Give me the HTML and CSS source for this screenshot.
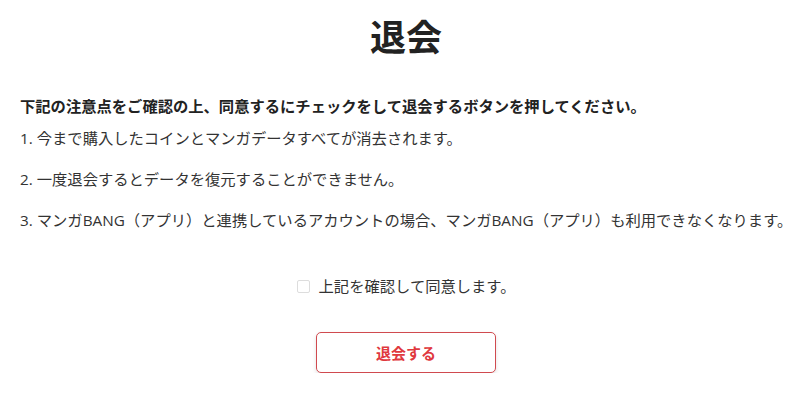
FILE: index.html
```html
<!doctype html>
<html lang="ja">
<head>
<meta charset="UTF-8">
<title>退会</title>
<link rel="stylesheet" href="styles.css">
</head>
<body>
	<main class="withdraw">
		<h1 class="withdraw-title">退会</h1>

		<p class="withdraw-lead">下記の注意点をご確認の上、同意するにチェックをして退会するボタンを押してください。</p>
		<p class="withdraw-note">1. 今まで購入したコインとマンガデータすべてが消去されます。</p>
		<p class="withdraw-note">2. 一度退会するとデータを復元することができません。</p>
		<p class="withdraw-note">3. マンガBANG（アプリ）と連携しているアカウントの場合、マンガBANG（アプリ）も利用できなくなります。</p>

		<label class="agree">
			<input type="checkbox" class="agree-box">
			<span>上記を確認して同意します。</span>
		</label>

		<div class="actions">
			<button type="button" class="btn-withdraw">退会する</button>
		</div>
	</main>
</body>
</html>
```

FILE: styles.css
```css
body {
	margin: 0;
	background: #fff;
	color: #333;
	font-family: "Open Sans", "Noto Sans CJK JP", sans-serif;
}

.withdraw { padding: 16px 8px 0 20px; }

.withdraw-title {
	margin: 0;
	font-size: 36px;
	line-height: 44px;
	font-weight: 700;
	text-align: center;
	color: #222;
}

.withdraw-lead {
	margin: 34px 0 8px;
	font-size: 15.3px;
	line-height: 24px;
	font-weight: 700;
	color: #222;
}

.withdraw-note {
	margin: 0 0 17px;
	font-size: 15.3px;
	line-height: 24px;
	white-space: nowrap;
}

.agree {
	display: flex;
	justify-content: center;
	align-items: center;
	gap: 9px;
	margin-top: 42px;
	font-size: 15.3px;
	line-height: 24px;
}

.agree-box {
	appearance: none;
	margin: 0;
	width: 13px;
	height: 13px;
	border: 1px solid #ddd;
	border-radius: 2px;
	background: #fff;
}

.actions {
	display: flex;
	justify-content: center;
	margin-top: 34px;
}

.btn-withdraw {
	width: 180px;
	height: 41px;
	border: 1px solid #d04a4f;
	border-radius: 5px;
	background: #fff;
	box-shadow: 0 2px 4px rgba(0, 0, 0, 0.12);
	color: #e0393e;
	font-family: "Open Sans", "Noto Sans CJK JP", sans-serif;
	font-size: 15px;
	font-weight: 700;
}
```
